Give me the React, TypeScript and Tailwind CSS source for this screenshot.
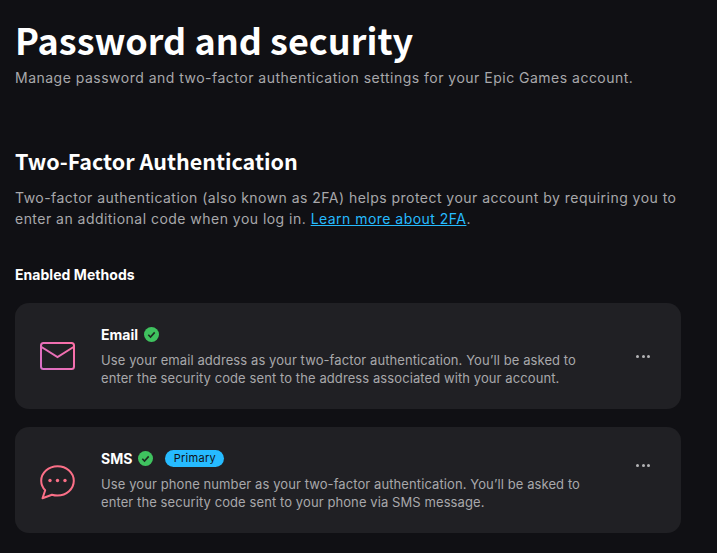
import { useId } from "react";

const inter = "font-['Inter',sans-serif]";

function CheckBadge() {
  return (
    <svg width="15" height="15" viewBox="0 0 15 15" className="shrink-0">
      <circle cx="7.5" cy="7.5" r="7.5" fill="#3fc25f" />
      <path d="M4.300 7.800 6.500 10l4.200-4.600" fill="none" stroke="#1d2a20" strokeWidth="1.6" />
    </svg>
  );
}

function MailIcon() {
  const id = useId();
  return (
    <svg width="35" height="28" viewBox="0 0 35 28" fill="none">
      <defs>
        <linearGradient id={id} x1="0" y1="28" x2="35" y2="0" gradientUnits="userSpaceOnUse">
          <stop stopColor="#d66fc8" />
          <stop offset="1" stopColor="#ff6fa3" />
        </linearGradient>
      </defs>
      <rect x="1" y="1" width="33" height="26" rx="2.5" stroke={`url(#${id})`} strokeWidth="2" />
      <path d="M1.500 5 17.500 15 33.500 5" stroke={`url(#${id})`} strokeWidth="2" />
    </svg>
  );
}

function ChatIcon() {
  return (
    <svg width="35" height="35" viewBox="0 0 35 35" fill="none" className="mt-[4px]">
      <path
        d="M17.500 1.200C8.500 1.200 1.200 8 1.200 15.800c0 3.700 1.500 7 4 9.500L2.500 33.200l9.500-3.500c1.700.5 3.600.8 5.500.8 9 0 16.300-6.500 16.300-14.700S26.500 1.200 17.500 1.200Z"
        stroke="#fb6f87"
        strokeWidth="2"
        strokeLinejoin="round"
      />
      <circle cx="10" cy="15.500" r="1.700" fill="#fb6f87" />
      <circle cx="17.500" cy="15.500" r="1.700" fill="#fb6f87" />
      <circle cx="25" cy="15.500" r="1.700" fill="#fb6f87" />
    </svg>
  );
}

function Dots() {
  return (
    <div className="flex gap-[2.5px] ml-[1px] h-[3px]">
      <span className="w-[3px] h-[3px] rounded-full bg-[#b4b4b6]" />
      <span className="w-[3px] h-[3px] rounded-full bg-[#b4b4b6]" />
      <span className="w-[3px] h-[3px] rounded-full bg-[#b4b4b6]" />
    </div>
  );
}

interface MethodProps {
  icon: React.ReactNode;
  title: string;
  primary?: boolean;
  lines: string[];
}

function Method({ icon, title, primary, lines }: MethodProps) {
  return (
    <div className="flex h-[106px] rounded-[14px] bg-[#202024]">
      <div className="w-[86px] shrink-0 flex items-center justify-center pr-[2px]">{icon}</div>
      <div className="flex-1 pt-[21px]">
        <div className="flex items-center h-[20px]">
          <span className="text-[14px] font-bold text-white">{title}</span>
          <span className="ml-[6px]">
            <CheckBadge />
          </span>
          {primary && (
            <span className="ml-[12px] h-[17px] w-[59px] rounded-full bg-[#26bbff] flex items-center justify-center text-[11px] font-normal tracking-[0.3px] text-[#101014]">
              Primary
            </span>
          )}
        </div>
        <p className="mt-[7px] text-[13px] leading-[18px] tracking-[0.09px] text-[#a8a8ab] whitespace-nowrap">
          {lines[0]}
          <br />
          {lines[1]}
        </p>
      </div>
      <div className={`w-[46px] shrink-0 ${primary ? "pt-[37px]" : "pt-[52px]"}`}>
        <Dots />
      </div>
    </div>
  );
}

export default function App() {
  return (
    <div className={`w-[717px] h-[553px] overflow-hidden bg-[#101014] pl-[15px] pr-[36px] ${inter}`}>
      <h1 className="pt-[13px] text-[36px] leading-[52px] font-bold text-white font-['Noto_Sans_CJK_KR',sans-serif] whitespace-nowrap">
        Password and security
      </h1>
      <p className="text-[14px] leading-[20px] tracking-[0.49px] text-[#a8a8ab] whitespace-nowrap mt-[3px]">
        Manage password and two-factor authentication settings for your Epic Games account.
      </p>
      <h2 className="mt-[58px] text-[21.5px] leading-[30px] font-bold text-white font-['Noto_Sans_CJK_KR',sans-serif]">
        Two-Factor Authentication
      </h2>
      <p className="mt-[11px] text-[14px] leading-[21px] tracking-[0.47px] text-[#a8a8ab] whitespace-nowrap">
        Two-factor authentication (also known as 2FA) helps protect your account by requiring you to
        <br />
        enter an additional code when you log in.{" "}
        <a className="text-[#26bbff] underline">Learn more about 2FA</a>.
      </p>
      <h3 className="mt-[36px] text-[14px] leading-[20px] tracking-[0.05px] font-bold text-white">
        Enabled Methods
      </h3>
      <div className="mt-[18px] flex flex-col gap-[18px]">
        <Method
          icon={<MailIcon />}
          title="Email"
          lines={[
            "Use your email address as your two-factor authentication. You’ll be asked to",
            "enter the security code sent to the address associated with your account.",
          ]}
        />
        <Method
          icon={<ChatIcon />}
          title="SMS"
          primary
          lines={[
            "Use your phone number as your two-factor authentication. You’ll be asked to",
            "enter the security code sent to your phone via SMS message.",
          ]}
        />
      </div>
    </div>
  );
}
